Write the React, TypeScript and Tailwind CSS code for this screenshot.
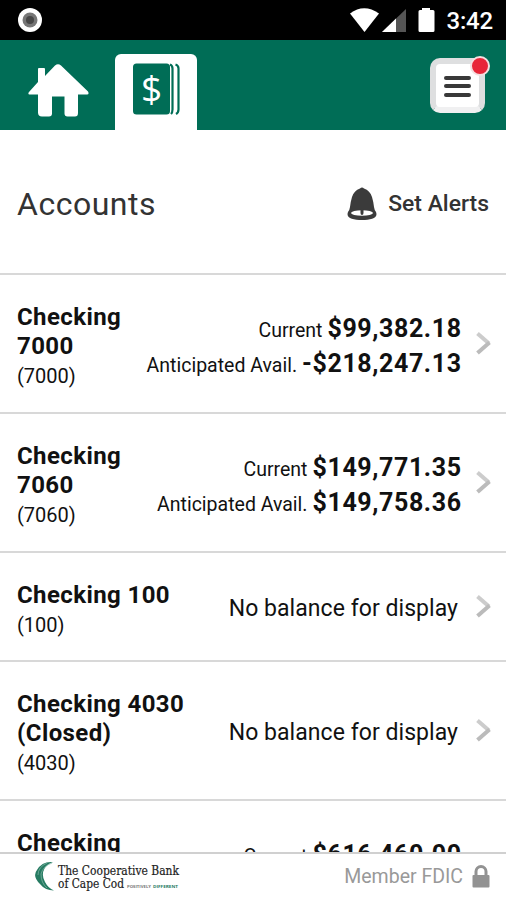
import type { ReactNode } from 'react'

type Account = {
	name: string[]
	number: string
	height: string
	current?: string
	available?: string
}

const accounts: Account[] = [
	{
		name: ['Checking', '7000'],
		number: '(7000)',
		height: 'h-[139px]',
		current: '$99,382.18',
		available: '-$218,247.13',
	},
	{
		name: ['Checking', '7060'],
		number: '(7060)',
		height: 'h-[139px]',
		current: '$149,771.35',
		available: '$149,758.36',
	},
	{ name: ['Checking 100'], number: '(100)', height: 'h-[109px]' },
	{
		name: ['Checking 4030', '(Closed)'],
		number: '(4030)',
		height: 'h-[139px]',
	},
	{
		name: ['Checking'],
		number: '',
		height: 'h-[139px]',
		current: '$616,460.00',
	},
]

function StatusBar() {
	return (
		<div className="flex h-10 shrink-0 items-center bg-black pr-[13px] pl-[18px] text-white">
			<svg className="h-6 w-6" viewBox="0 0 24 24">
				<circle cx="12" cy="12" r="12" fill="#fff" />
				<circle cx="12" cy="12" r="7.5" fill="#777" />
				<circle cx="12" cy="12" r="4" fill="#484848" />
			</svg>
			<svg className="ml-auto h-6 w-[86px]" viewBox="0 0 86 24" fill="#fff">
				<path d="M1 5.5Q15-5 30 5.5L15.500 24Z" />
				<path d="M57 1V24H33Z" fill="#555" />
				<path d="M47 10.5V24H33Z" />
				<path d="M73 2V0h8v2h3q1.5 0 1.5 1.500v19q0 1.500-1.500 1.500H71q-1.500 0-1.500-1.500v-19Q69.500 2 71 2Z" />
			</svg>
			<span className="ml-[12px] pt-[2px] text-[24px] leading-[38px] font-medium tracking-[-0.2px]">
				3:42
			</span>
		</div>
	)
}

function TabBar() {
	return (
		<div className="flex h-[90px] shrink-0 items-end bg-[#006d56]">
			<svg
				className="mb-[13px] ml-7 h-[53px] w-[61px]"
				viewBox="0 0 61 53"
				fill="#fff"
			>
				<path d="M10 18V5q0-1 1-1h5q1 0 1 1v7L27 1.5q3-2.500 6 0l27 26q1.500 3-1 3h-9V49q0 3.500-3 3.500H39.500q-3 0-3-3V32.500H24V49.500q0 3-3 3h-7q-4 0-4-4V30.500H1.500Q-.5 30 1 28Z" />
			</svg>
			<div className="ml-[26px] flex h-[76px] w-[82px] justify-center rounded-t-md bg-white pt-[9px]">
				<svg className="h-[52px] w-[48px]" viewBox="0 0 48 52">
					<rect x="1" y="0.500" width="37" height="51" rx="3.500" fill="#006d56" />
					<g fill="none" stroke="#006d56" strokeWidth="2.200">
						<path d="M38 1.500q2.500 1 2.500 4v41q0 3-1.500 4.500" />
						<path d="M43.500 1.500q3 1 3 4v41q0 3-2.500 4.500" />
					</g>
					<text
						x="19.500"
						y="38.500"
						textAnchor="middle"
						fontFamily="Open Sans, sans-serif"
						fontSize="37"
						fill="#fff"
					>
						$
					</text>
				</svg>
			</div>
			<button
				aria-label="Menu"
				className="relative mr-[21px] mb-[17px] ml-auto h-[55px] w-[55px] rounded-[10px] border-[6px] border-[#dedfe0] border-b-[#f0f0f1] bg-white"
			>
				<span className="mx-auto mt-px flex w-[27px] flex-col gap-[4.500px]">
					<span className="h-[4px] rounded-full bg-[#393939]" />
					<span className="h-[4px] rounded-full bg-[#393939]" />
					<span className="h-[4px] rounded-full bg-[#393939]" />
				</span>
				<span className="absolute -top-[8px] -right-[11px] h-[20px] w-[20px] rounded-full border-2 border-[#f4dfe0] bg-[#e82538]" />
			</button>
		</div>
	)
}

function BellIcon() {
	return (
		<svg className="h-[33px] w-[30px]" viewBox="0 0 30 33">
			<path
				d="M13 1.500q2-2 4 0 6 2 8 8.500 1.500 5 2 10 .4 3 2 5c2.500 6-5 8-14 8S-1.500 31 1 25q1.600-2 2-5 .5-5 2-10Q7 3.500 13 1.500Z"
				fill="#3b3b3b"
			/>
			<ellipse cx="15" cy="26" rx="11" ry="2.800" fill="#fff" />
			<path d="M13.500 22h3v4q0 2-1.500 2t-1.500-2Z" fill="#3b3b3b" />
		</svg>
	)
}

function Balance({ label, children }: { label: string; children: ReactNode }) {
	return (
		<div className="flex h-[35.500px] items-baseline justify-end gap-[5px] whitespace-nowrap">
			<span className="text-[19.500px]">{label}</span>
			<span className="-mr-[0.600px] text-[25px] font-bold tracking-[0.600px]">
				{children}
			</span>
		</div>
	)
}

function AccountRow({ account }: { account: Account }) {
	return (
		<li
			className={`flex shrink-0 border-t-2 border-[#d8d8d8] pr-[14px] pl-[17px] ${account.height}`}
		>
			<div className="pt-[28px] whitespace-nowrap">
				{account.name.map(line => (
					<div
						key={line}
						className="text-[24px] leading-[29px] font-bold tracking-[0.400px]"
					>
						{line}
					</div>
				))}
				<div className="text-[20px] leading-[30px]">{account.number}</div>
			</div>
			<div className="ml-auto flex h-full items-center">
				{account.current ? (
					<div className="mr-[15px] h-[74px] pt-[3px]">
						<Balance label="Current">{account.current}</Balance>
						{account.available && (
							<Balance label="Anticipated Avail.">{account.available}</Balance>
						)}
					</div>
				) : (
					<span className="mr-[18px] pt-[5px] text-[23px] tracking-[0.050px]">
						No balance for display
					</span>
				)}
				<svg
					className="h-[23px] w-4"
					viewBox="0 0 16 23"
					fill="none"
					strokeWidth="4"
				>
					<path d="M1.500 1.500 13 11.500" stroke="#ccc" />
					<path d="M13.500 10.500 1.500 21" stroke="#bbb" />
				</svg>
			</div>
		</li>
	)
}

function BankLogo() {
	return (
		<svg className="h-8 w-[148px]" viewBox="0 0 148 32">
			<path
				d="M19 1Q13 3 10.500 7.500 7 14 11 21q3 6 9 8.500-9 0-14-6.500Q-2 15 3 9 8 0 19 1Z"
				fill="#267b62"
			/>
			<path
				d="M18 2Q9 5 7 13q0 9 6 14M13 2Q4 6 4 14"
				fill="none"
				stroke="#85b9a9"
				strokeWidth="0.700"
			/>
			<g
				fontFamily="DejaVu Serif, serif"
				fontSize="12.500"
				fill="#222"
				stroke="#222"
				strokeWidth="0.200"
			>
				<text x="24" y="13.500" textLength="121" lengthAdjust="spacingAndGlyphs">
					The Cooperative Bank
				</text>
				<text x="24" y="26.500" textLength="66" lengthAdjust="spacingAndGlyphs">
					of Cape Cod
				</text>
			</g>
			<g fontFamily="Open Sans, sans-serif" fontSize="3.800" fontWeight="700">
				<text
					x="93"
					y="26.500"
					textLength="24"
					lengthAdjust="spacingAndGlyphs"
					fill="#777"
				>
					POSITIVELY
				</text>
				<text
					x="119"
					y="26.500"
					textLength="25"
					lengthAdjust="spacingAndGlyphs"
					fill="#267b62"
				>
					DIFFERENT
				</text>
			</g>
		</svg>
	)
}

function Footer() {
	return (
		<footer className="flex h-[48px] shrink-0 items-center border-t-2 border-[#d0d0d0] bg-white pr-[16px] pb-px pl-[34px]">
			<BankLogo />
			<span className="ml-auto text-[19.500px] text-[#999]">Member FDIC</span>
			<svg className="ml-[9px] h-[23px] w-[18px]" viewBox="0 0 18 23">
				<path
					d="M4 11V6.500a5 5 0 0 1 10 0V11"
					fill="none"
					stroke="#929292"
					strokeWidth="3"
				/>
				<rect x="0.500" y="10" width="17" height="12.500" rx="1" fill="#929292" />
			</svg>
		</footer>
	)
}

export default function App() {
	return (
		<div className="flex h-[900px] w-[506px] flex-col overflow-hidden bg-white font-['Roboto',sans-serif] text-[#111]">
			<StatusBar />
			<TabBar />
			<main className="flex min-h-0 flex-1 flex-col overflow-hidden">
				<div className="flex h-[143px] shrink-0 items-center px-[17px] pt-[4px] text-[#333]">
					<h1 className="text-[32px] tracking-[0.500px]">Accounts</h1>
					<div className="ml-auto flex items-center gap-[11px]">
						<BellIcon />
						<span className="pt-[2px] text-[22.900px] font-medium">
							Set Alerts
						</span>
					</div>
				</div>
				<ul className="flex flex-col">
					{accounts.map(account => (
						<AccountRow key={account.name.join(' ')} account={account} />
					))}
				</ul>
			</main>
			<Footer />
		</div>
	)
}
